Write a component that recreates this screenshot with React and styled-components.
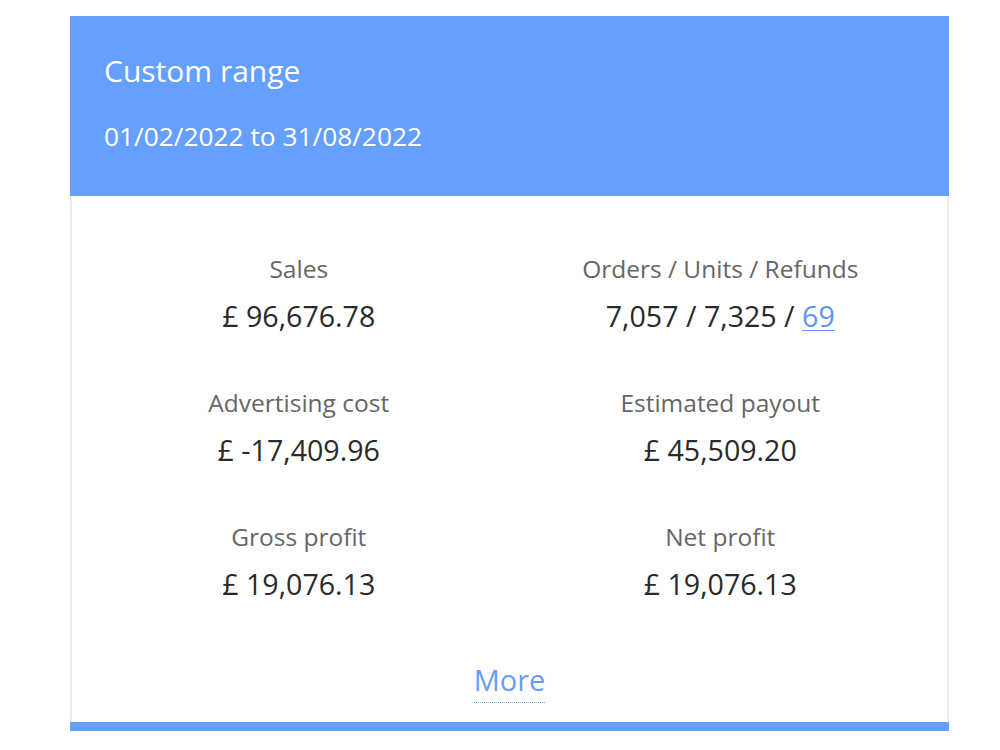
import React from 'react';
import styled, { createGlobalStyle } from 'styled-components';

const GlobalStyle = createGlobalStyle`
  body {
    margin: 0;
    background: #ffffff;
    font-family: "Open Sans", "Liberation Sans", sans-serif;
  }
`;

const Page = styled.div`
  padding: 16px 0 0 70px;
`;

const Card = styled.div`
  width: 879px;
  background: #ffffff;
  border-bottom: 9px solid #66a0fe;
`;

const CardHeader = styled.div`
  background: #66a0fe;
  color: #ffffff;
  padding: 37px 34px 44px;
`;

const Title = styled.div`
  font-size: 30px;
  line-height: 36px;
  font-weight: 400;
`;

const DateRange = styled.div`
  margin-top: 31px;
  font-size: 26.3px;
  line-height: 32px;
`;

const CardBody = styled.div`
  border-left: 2px solid #ececec;
  border-right: 2px solid #ececec;
  padding: 58px 16px 19px;
  display: flex;
  flex-direction: column;
  align-items: center;
`;

const StatsGrid = styled.div`
  width: 100%;
  display: grid;
  grid-template-columns: 1fr 1fr;
  row-gap: 54px;
`;

const Stat = styled.div`
  display: flex;
  flex-direction: column;
  align-items: center;
  gap: 14px;
`;

const Label = styled.div`
  font-size: 24.5px;
  line-height: 30px;
  color: #666666;
`;

const Value = styled.div`
  font-size: 28.6px;
  line-height: 36px;
  color: #2a2a2a;
`;

const RefundLink = styled.a`
  color: #5b96f0;
  text-decoration: underline;
  text-underline-offset: 3px;
  text-decoration-thickness: 1px;
`;

const MoreLink = styled.a`
  margin-top: 60px;
  font-size: 29px;
  line-height: 36px;
  padding-bottom: 4px;
  color: #6b9cf5;
  border-bottom: 1px dotted #7aa6f0;
  text-decoration: none;
  cursor: pointer;
`;

const stats = [
  { label: 'Sales', value: '£ 96,676.78' },
  { label: 'Orders / Units / Refunds', value: 'orders' },
  { label: 'Advertising cost', value: '£ -17,409.96' },
  { label: 'Estimated payout', value: '£ 45,509.20' },
  { label: 'Gross profit', value: '£ 19,076.13' },
  { label: 'Net profit', value: '£ 19,076.13' },
];

export default function App() {
  return (
    <>
      <GlobalStyle />
      <Page>
        <Card>
          <CardHeader>
            <Title>Custom range</Title>
            <DateRange>01/02/2022 to 31/08/2022</DateRange>
          </CardHeader>
          <CardBody>
            <StatsGrid>
              {stats.map((s) => (
                <Stat key={s.label}>
                  <Label>{s.label}</Label>
                  <Value>
                    {s.value === 'orders' ? (
                      <>
                        7,057 / 7,325 / <RefundLink href="#">69</RefundLink>
                      </>
                    ) : (
                      s.value
                    )}
                  </Value>
                </Stat>
              ))}
            </StatsGrid>
            <MoreLink>More</MoreLink>
          </CardBody>
        </Card>
      </Page>
    </>
  );
}
